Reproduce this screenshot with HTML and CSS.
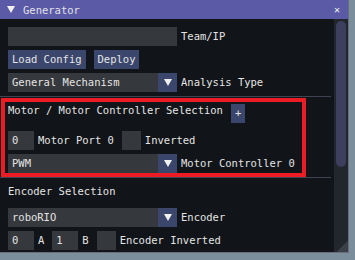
FILE: index.html
```html
<!DOCTYPE html>
<html lang="en">
<head>
    <meta charset="UTF-8">
    <title>Generator</title>
    <link rel="stylesheet" href="styles.css">
</head>
<body>
    <div class="window">
        <div class="titlebar">
            <span class="collapse"></span>
            <span class="title">Generator</span>
            <span class="close">&#x2715;</span>
        </div>
        <div class="body">
            <div class="content">
                <div class="row first">
                    <div class="field wide"></div>
                    <span class="label">Team/IP</span>
                </div>
                <div class="row">
                    <span class="btn">Load Config</span>
                    <span class="btn">Deploy</span>
                </div>
                <div class="row">
                    <div class="combo"><span class="value">General Mechanism</span><span class="arrow"></span></div>
                    <span class="label">Analysis Type</span>
                </div>
                <div class="separator"></div>

                <div class="row heading">
                    <span class="text">Motor / Motor Controller Selection</span>
                    <span class="btn plus">+</span>
                </div>
                <div class="row spaced">
                    <div class="field small">0</div>
                    <span class="label">Motor Port 0</span>
                    <div class="check"></div>
                    <span class="label">Inverted</span>
                </div>
                <div class="row">
                    <div class="combo"><span class="value">PWM</span><span class="arrow"></span></div>
                    <span class="label">Motor Controller 0</span>
                </div>
                <div class="separator"></div>

                <div class="row heading">
                    <span class="text">Encoder Selection</span>
                </div>
                <div class="row">
                    <div class="combo"><span class="value">roboRIO</span><span class="arrow"></span></div>
                    <span class="label">Encoder</span>
                </div>
                <div class="row">
                    <div class="field small">0</div>
                    <span class="label">A</span>
                    <div class="field small">1</div>
                    <span class="label">B</span>
                    <div class="check"></div>
                    <span class="label">Encoder Inverted</span>
                </div>
                <div class="row">
                    <div class="check"></div>
                </div>
            </div>
            <div class="scrollbar"><div class="thumb"></div></div>
        </div>
        <div class="highlight"></div>
        <div class="grip"></div>
    </div>
</body>
</html>
```

FILE: styles.css
```css
body {
    margin: 0;
    background: #7a8e9b;
    font-family: "DejaVu Sans Mono", monospace;
    font-size: 10.5px;
    color: #e4e4e4;
}
.window {
    position: relative;
    width: 349px;
    height: 253px;
    box-sizing: border-box;
    border-right: 1px solid #6a6d80;
    border-bottom: 1px solid #6a6d80;
    background: #111418;
    overflow: hidden;
    display: flex;
    flex-direction: column;
}
.titlebar {
    height: 19px;
    flex: none;
    background: #5a5aa6;
    display: flex;
    align-items: center;
    color: #e2e2e8;
}
.collapse {
    width: 0;
    height: 0;
    margin-left: 7px;
    border-left: 4px solid transparent;
    border-right: 4px solid transparent;
    border-top: 7px solid #f0f0f0;
}
.title {
    margin-left: 8px;
}
.close {
    margin-left: auto;
    margin-right: 8px;
    font-size: 10px;
    color: #f0f0f0;
}
.body {
    flex: 1;
    display: flex;
    min-height: 0;
}
.content {
    flex: 1;
    padding-left: 8px;
    overflow: hidden;
}
.row {
    display: flex;
    align-items: center;
    height: 19px;
    line-height: 19px;
    margin-top: 4px;
    white-space: nowrap;
}
.row.first {
    margin-top: 8px;
}
.row.heading {
    align-items: flex-start;
    line-height: 13px;
    margin-top: 7px;
}
.row.spaced {
    margin-top: 8px;
}
.field {
    height: 19px;
    background: #35383c;
    box-sizing: border-box;
    padding-left: 4px;
}
.field.wide {
    width: 169px;
}
.field.small {
    width: 26px;
}
.label {
    margin-left: 4px;
    margin-right: 8px;
}
.btn {
    height: 19px;
    padding: 0 4px;
    background: #3b466d;
    margin-right: 8px;
}
.btn.plus {
    line-height: 19px;
    margin-left: 8px;
    padding: 0 4px;
}
.combo {
    width: 169px;
    height: 19px;
    display: flex;
    background: #35383c;
}
.combo .value {
    flex: 1;
    padding-left: 4px;
}
.combo .arrow {
    width: 19px;
    background: #3b466d;
    display: flex;
    align-items: center;
    justify-content: center;
}
.combo .arrow::after {
    content: "";
    border-left: 4px solid transparent;
    border-right: 4px solid transparent;
    border-top: 7px solid #f0f0f0;
}
.check {
    width: 19px;
    height: 19px;
    background: #35383c;
}
.separator {
    height: 1px;
    width: 331px;
    margin-left: -8px;
    margin-top: 4px;
    background: #404350;
}
.scrollbar {
    width: 14px;
    flex: none;
    background: #22262d;
    padding: 2px;
    box-sizing: border-box;
}
.thumb {
    height: 146px;
    border-radius: 5px;
    background: #3c3f5e;
}
.highlight {
    position: absolute;
    left: 1px;
    top: 98px;
    width: 305px;
    height: 79px;
    box-sizing: border-box;
    border: 4px solid #ec1c24;
}
.grip {
    position: absolute;
    right: 0;
    bottom: 0;
    width: 12px;
    height: 12px;
    background: linear-gradient(135deg, transparent 50%, #3b3f48 50%);
}
```
